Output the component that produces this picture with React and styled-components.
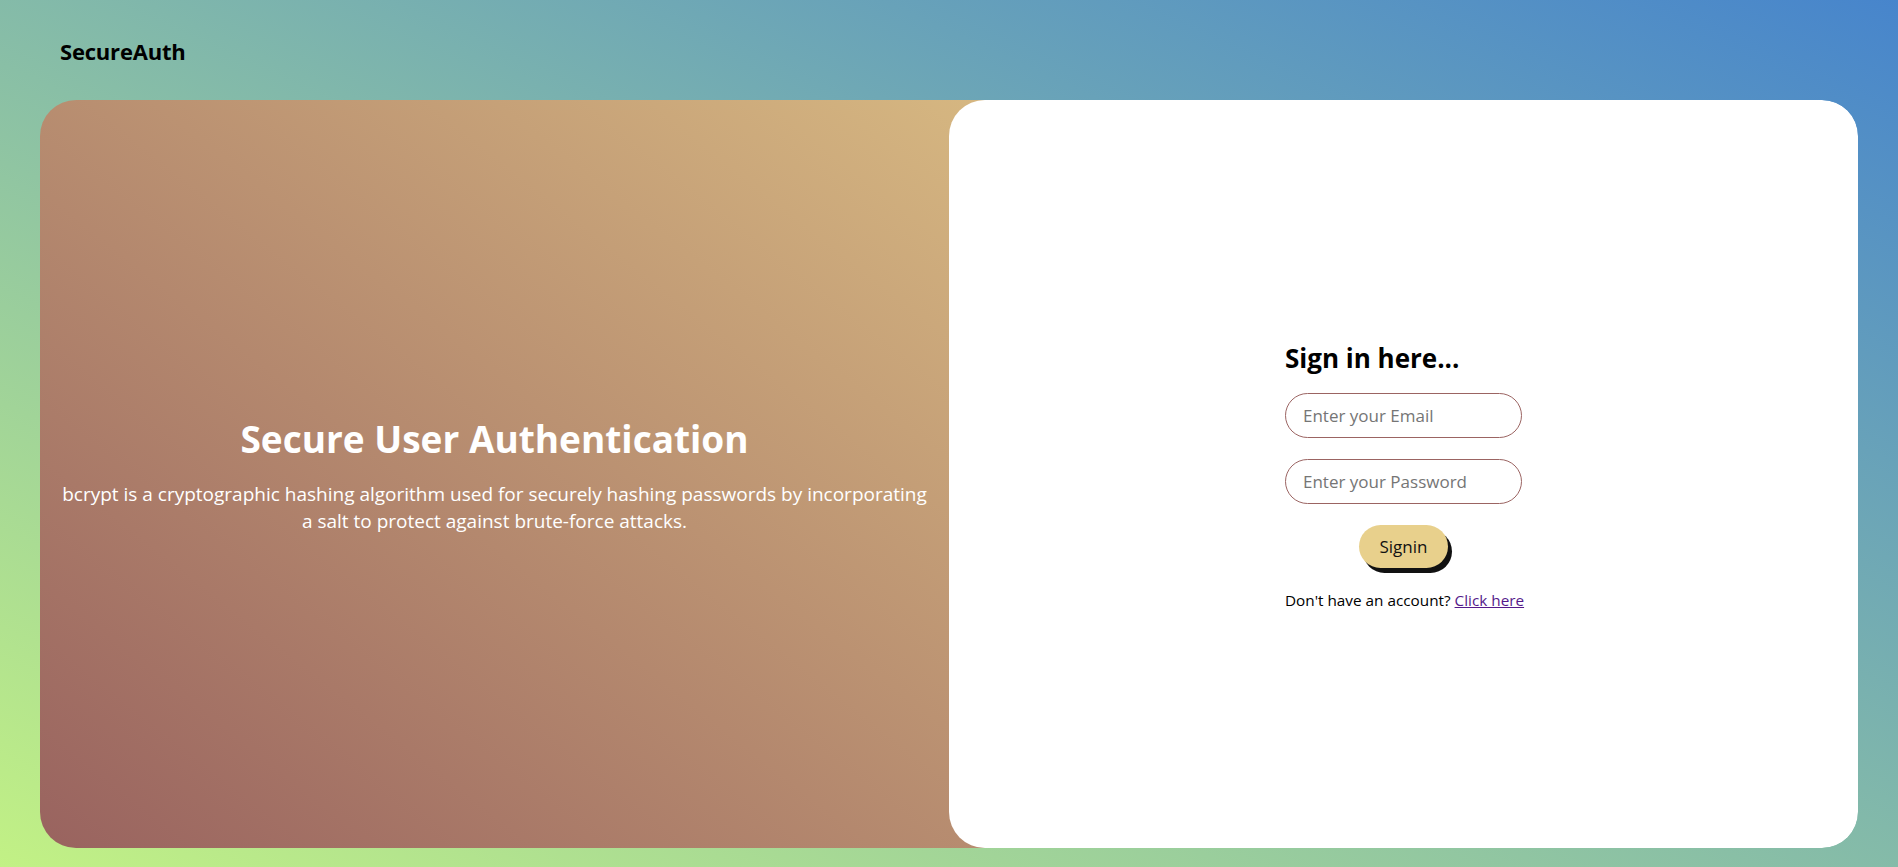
import React from 'react'
import styled, { createGlobalStyle } from 'styled-components'

const GlobalStyle = createGlobalStyle`
  * {
    box-sizing: border-box;
  }
  body {
    margin: 0;
    font-family: "Open Sans", "Liberation Sans", sans-serif;
  }
`

const App = () => {
  return (
    <>
      <GlobalStyle />
      <Page>
        <Header>
          <Logo>SecureAuth</Logo>
        </Header>
        <Card>
          <Hero>
            <h1>Secure User Authentication</h1>
            <p>
              bcrypt is a cryptographic hashing algorithm used for securely hashing passwords by incorporating
              a salt to protect against brute-force attacks.
            </p>
          </Hero>
          <FormPanel>
            <Form onSubmit={(e) => e.preventDefault()}>
              <h2>Sign in here...</h2>
              <Input type="email" placeholder="Enter your Email" />
              <Input type="password" placeholder="Enter your Password" />
              <Button type="submit">Signin</Button>
              <Note>
                Don't have an account? <a href="#signup">Click here</a>
              </Note>
            </Form>
          </FormPanel>
        </Card>
      </Page>
    </>
  )
}

const Page = styled.div`
  min-height: 100vh;
  padding: 0 40px 19px;
  display: flex;
  flex-direction: column;
  background: linear-gradient(to top right, #c2f185, #4785cc);
`

const Header = styled.header`
  height: 100px;
  display: flex;
  align-items: center;
  padding: 2px 0 0 20px;
`

const Logo = styled.div`
  font-size: 22px;
  font-weight: 700;
  color: #000;
  letter-spacing: -0.2px;
`

const Card = styled.main`
  display: flex;
  height: 748px;
  border-radius: 36px;
  overflow: hidden;
`

const Hero = styled.section`
  flex: 0 0 calc(50% + 40px);
  margin-right: -40px;
  padding: 0 62px 0 22px;
  display: flex;
  flex-direction: column;
  justify-content: center;
  align-items: center;
  text-align: center;
  color: #fff;
  background: linear-gradient(to top right, #99635f, #d6b781);
  h1 {
    margin: 0 0 17px;
    font-size: 37px;
    font-weight: 700;
  }
  p {
    margin: 0;
    font-size: 19px;
    line-height: 27px;
  }
`

const FormPanel = styled.section`
  flex: 1;
  position: relative;
  z-index: 1;
  background: #fff;
  border-radius: 36px;
  display: flex;
  align-items: center;
  justify-content: center;
  padding-top: 2px;
`

const Form = styled.form`
  width: 237px;
  display: flex;
  flex-direction: column;
  align-items: flex-start;
  h2 {
    margin: 0 0 17px;
    font-size: 26px;
    font-weight: 700;
    color: #000;
  }
`

const Input = styled.input`
  width: 100%;
  height: 45px;
  margin-bottom: 21px;
  padding: 0 17px;
  border: 1px solid #9b6462;
  border-radius: 23px;
  background: #fff;
  font-family: inherit;
  font-size: 17px;
  outline: none;
  &::placeholder {
    color: #757575;
  }
`

const Button = styled.button`
  align-self: center;
  margin: 0;
  width: 89px;
  height: 43px;
  border: none;
  border-radius: 22px;
  background: #e8d08c;
  box-shadow: 4px 5px 0 #111;
  font-family: inherit;
  font-size: 17px;
  color: #111;
  cursor: pointer;
`

const Note = styled.p`
  margin: 22px 0 0;
  font-size: 15.3px;
  color: #000;
  white-space: nowrap;
  a {
    color: #551a8b;
  }
`

export default App
